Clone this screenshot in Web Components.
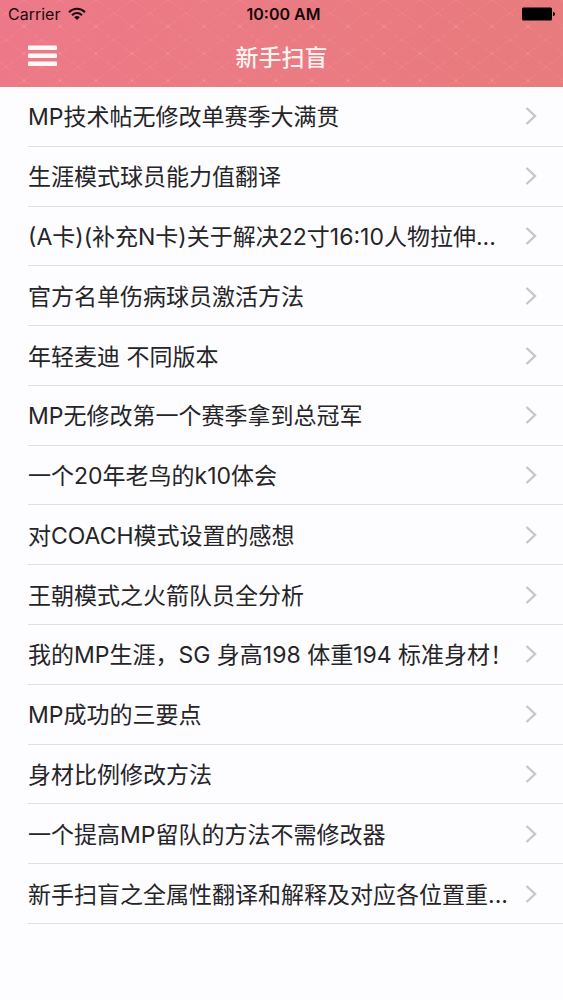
<!DOCTYPE html>
<html lang="zh-CN">
<head>
<meta charset="utf-8">
<meta name="viewport" content="width=device-width, initial-scale=1">
<title>新手扫盲</title>
<style>
  body {
    margin: 0;
    background: #fdfcff;
    color: #252528;
    font-family: Inter, "Noto Sans CJK SC", sans-serif;
  }
</style>
</head>
<body>
<topic-page>
  <app-header slot="header">
    <status-bar slot="status" carrier="Carrier" time="10:00 AM"></status-bar>
    新手扫盲
  </app-header>
  <topic-row>MP技术帖无修改单赛季大满贯</topic-row>
  <topic-row>生涯模式球员能力值翻译</topic-row>
  <topic-row>(A卡)(补充N卡)关于解决22寸16:10人物拉伸...</topic-row>
  <topic-row>官方名单伤病球员激活方法</topic-row>
  <topic-row>年轻麦迪 不同版本</topic-row>
  <topic-row>MP无修改第一个赛季拿到总冠军</topic-row>
  <topic-row>一个20年老鸟的k10体会</topic-row>
  <topic-row>对COACH模式设置的感想</topic-row>
  <topic-row>王朝模式之火箭队员全分析</topic-row>
  <topic-row>我的MP生涯，SG 身高198 体重194 标准身材！</topic-row>
  <topic-row>MP成功的三要点</topic-row>
  <topic-row>身材比例修改方法</topic-row>
  <topic-row>一个提高MP留队的方法不需修改器</topic-row>
  <topic-row>新手扫盲之全属性翻译和解释及对应各位置重...</topic-row>
</topic-page>

<script>
const createTemplate = (html) => {
  const template = document.createElement('template')
  template.innerHTML = html
  return template
}

const pageTemplate = createTemplate(`<style>
  :host {
    display: flex;
    flex-direction: column;
    min-height: 100vh;
  }

  main {
    flex: 1;
    display: grid;
    grid-auto-rows: 1fr;
    padding-bottom: 76px;
  }
</style>
<slot name="header"></slot>
<main><slot></slot></main>
`)

class TopicPage extends HTMLElement {
  constructor() {
    super()
    this._shadowRoot = this.attachShadow({ mode: 'open' })
    this._shadowRoot.appendChild(pageTemplate.content.cloneNode(true))
  }
}

const statusTemplate = createTemplate(`<style>
  :host {
    display: grid;
    grid-template-columns: 1fr auto 1fr;
    align-items: center;
    height: 28px;
    padding: 0 8px;
    color: #1c0b0e;
    font-size: 16px;
    line-height: 28px;
  }

  .network {
    display: flex;
    align-items: center;
    gap: 8px;
  }

  .time {
    padding-left: 4px;
    color: #120609;
    font-weight: 600;
  }

  .battery {
    justify-self: end;
  }

  svg {
    display: block;
  }
</style>
<div class="network">
  <span class="carrier"></span>
  <svg width="18" height="14" viewBox="0 0 18 14" fill="none" stroke="currentColor" stroke-width="2">
    <path d="M1 5.2C5.5.6 12.5.6 17 5.2"/>
    <path d="M4 8.2C6.9 5.3 11.1 5.3 14 8.2"/>
    <path d="M6.2 10.2C7.8 8.6 10.2 8.6 11.8 10.2L9 13z" fill="currentColor" stroke="none"/>
  </svg>
</div>
<span class="time"></span>
<svg class="battery" width="33" height="14" viewBox="0 0 33 14" fill="#000">
  <rect x="0" y="0.5" width="30" height="13" rx="1.5"/>
  <path d="M31 5c1.6.3 2 1.1 2 2s-.4 1.7-2 2z"/>
</svg>
`)

class StatusBar extends HTMLElement {
  constructor() {
    super()
    this._shadowRoot = this.attachShadow({ mode: 'open' })
    this._shadowRoot.appendChild(statusTemplate.content.cloneNode(true))
    this.$carrier = this._shadowRoot.querySelector('.carrier')
    this.$time = this._shadowRoot.querySelector('.time')
  }

  connectedCallback() {
    this.$carrier.innerText = this.getAttribute('carrier')
    this.$time.innerText = this.getAttribute('time')
  }
}

const headerTemplate = createTemplate(`<style>
  :host {
    display: block;
    position: relative;
    background: linear-gradient(100deg, #ed7988, #ea7b83 50%, #e87b7d);
  }

  .texture {
    position: absolute;
    inset: 0;
    width: 100%;
    height: 100%;
  }

  .content {
    position: relative;
  }

  .bar {
    display: grid;
    grid-template-columns: 1fr auto 1fr;
    align-items: center;
    height: 59px;
    padding: 0 28px;
  }

  .menu-button {
    justify-self: start;
    padding: 0 0 4px;
    border: 0;
    background: none;
    cursor: pointer;
  }

  .menu-button svg {
    display: block;
  }

  h1 {
    margin: 0;
    color: #fff4f2;
    font-size: 23px;
    font-weight: 500;
    line-height: 32px;
  }
</style>
<svg class="texture" aria-hidden="true">
  <defs>
    <pattern id="weave" width="36" height="27" x="6" y="13" patternUnits="userSpaceOnUse">
      <path d="M0 0L36 27M36 0L0 27" fill="none" stroke="#f7a3a5" stroke-opacity=".25" stroke-dasharray="5 2 2 3"/>
      <circle cx="18" cy="13.5" r="1" fill="#f9b3b2" fill-opacity=".5"/>
    </pattern>
  </defs>
  <rect width="100%" height="100%" fill="url(#weave)"/>
</svg>
<div class="content">
  <slot name="status"></slot>
  <div class="bar">
    <button class="menu-button" type="button" aria-label="菜单">
      <svg width="29" height="22" viewBox="0 0 29 22" fill="#fff8f6">
        <rect y="0.5" width="29" height="4.5" rx="1"/>
        <rect y="8.5" width="29" height="4.5" rx="1"/>
        <rect y="16.5" width="29" height="4.5" rx="1"/>
      </svg>
    </button>
    <h1><slot></slot></h1>
  </div>
</div>
`)

class AppHeader extends HTMLElement {
  constructor() {
    super()
    this._shadowRoot = this.attachShadow({ mode: 'open' })
    this._shadowRoot.appendChild(headerTemplate.content.cloneNode(true))
    this.$menu_button = this._shadowRoot.querySelector('.menu-button')
  }

  get menu_button() {
    return this.$menu_button
  }
}

const rowTemplate = createTemplate(`<style>
  :host {
    display: flex;
    min-width: 0;
    margin-left: 28px;
    border-bottom: 1px solid #e0dfe3;
  }

  a {
    flex: 1;
    display: flex;
    align-items: center;
    gap: 8px;
    min-width: 0;
    padding-right: 26px;
    color: inherit;
    text-decoration: none;
  }

  .title {
    flex: 1;
    overflow: hidden;
    padding-top: 2px;
    font-size: 23px;
    line-height: 36px;
    white-space: nowrap;
    text-overflow: ellipsis;
  }

  svg {
    flex: none;
  }
</style>
<a href="#">
  <span class="title"><slot></slot></span>
  <svg width="12" height="18" viewBox="0 0 12 18" fill="none" stroke="#c7c6cb" stroke-width="2.4">
    <path d="M1.5 1L10 9L1.5 17"/>
  </svg>
</a>
`)

class TopicRow extends HTMLElement {
  constructor() {
    super()
    this._shadowRoot = this.attachShadow({ mode: 'open' })
    this._shadowRoot.appendChild(rowTemplate.content.cloneNode(true))
  }
}

customElements.define('topic-page', TopicPage)
customElements.define('status-bar', StatusBar)
customElements.define('app-header', AppHeader)
customElements.define('topic-row', TopicRow)
</script>
</body>
</html>
